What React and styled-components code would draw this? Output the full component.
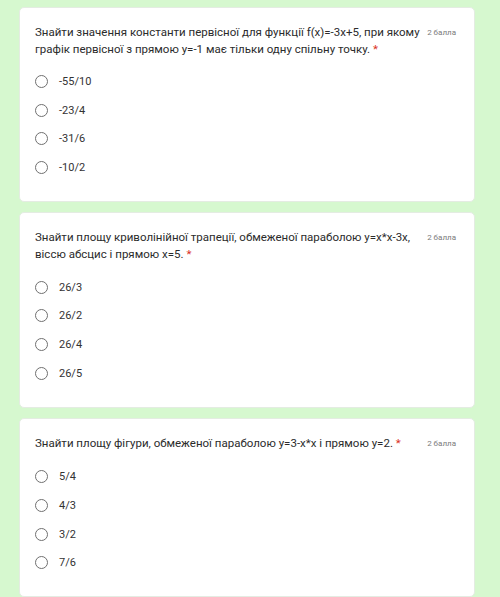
import React from "react";
import styled, { createGlobalStyle } from "styled-components";

const Global = createGlobalStyle`
  html, body { margin: 0; padding: 0; background: #d6f8cf; }
  body { font-family: Roboto, "Liberation Sans", Arial, sans-serif; }
`;

const Page = styled.div`
  width: 500px;
  min-height: 597px;
  box-sizing: border-box;
  padding: 7px 25px 0 19px;
  background: #d6f8cf;
  display: flex;
  flex-direction: column;
  gap: 10px;
`;

const Card = styled.div`
  background: #fff;
  border: 1px solid #e4ece2;
  border-radius: 5px;
  padding: 16px 18px 19px 15px;
  display: flex;
  flex-direction: column;
`;

const Header = styled.div`
  display: flex;
  align-items: flex-start;
  margin-bottom: ${(p) => p.$gap}px;
`;

const Question = styled.div`
  flex: 1;
  font-size: 11.5px;
  line-height: 17px;
  color: #2b2b2b;
`;

const Star = styled.span`
  color: #d93025;
`;

const Points = styled.div`
  flex: 0 0 auto;
  margin-left: 6px;
  font-size: 8px;
  line-height: 17px;
  color: #7a7a7a;
`;

const Options = styled.div`
  display: flex;
  flex-direction: column;
`;

const Option = styled.label`
  display: flex;
  align-items: center;
  height: 28.7px;
  font-size: 11px;
  color: #333;
`;

const Radio = styled.span`
  width: 11px;
  height: 11px;
  border: 1.5px solid #707070;
  border-radius: 50%;
  margin-right: 11px;
  flex: 0 0 auto;
`;

const questions = [
  {
    text: "Знайти значення константи первісної для функції f(x)=-3x+5, при якому графік первісної з прямою y=-1 має тільки одну спільну точку.",
    options: ["-55/10", "-23/4", "-31/6", "-10/2"],
    gap: 9,
  },
  {
    text: "Знайти площу криволінійної трапеції, обмеженої параболою y=x*x-3x, віссю абсцис і прямою x=5.",
    options: ["26/3", "26/2", "26/4", "26/5"],
    gap: 10,
  },
  {
    text: "Знайти площу фігури, обмеженої параболою y=3-x*x і прямою y=2.",
    options: ["5/4", "4/3", "3/2", "7/6"],
    gap: 11,
  },
];

export default function App() {
  return (
    <>
      <Global />
      <Page>
        {questions.map((q, i) => (
          <Card key={i}>
            <Header $gap={q.gap}>
              <Question>
                {q.text} <Star>*</Star>
              </Question>
              <Points>2 балла</Points>
            </Header>
            <Options>
              {q.options.map((o) => (
                <Option key={o}>
                  <Radio />
                  {o}
                </Option>
              ))}
            </Options>
          </Card>
        ))}
      </Page>
    </>
  );
}
